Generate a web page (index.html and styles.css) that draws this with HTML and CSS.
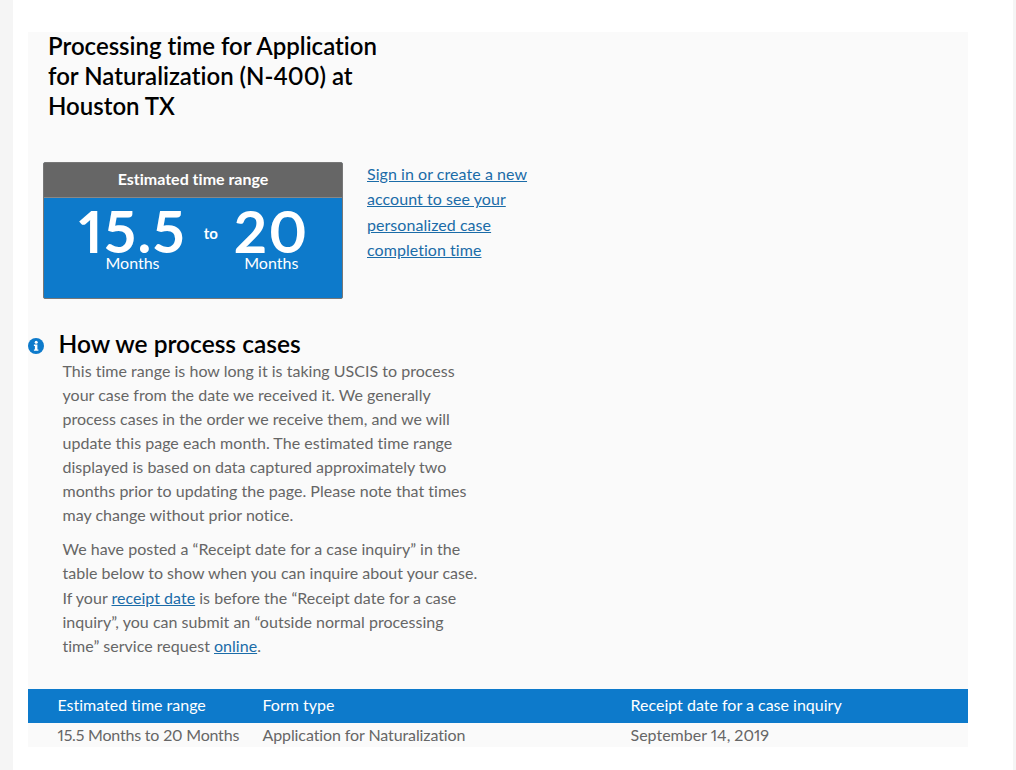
FILE: index.html
```html
<!DOCTYPE html>
<html lang="en">
<head>
<meta charset="utf-8">
<title>Processing time</title>
<link rel="stylesheet" href="styles.css">
</head>
<body>
<div class="sheet">
  <main class="panel">
    <h1 class="title">Processing time for Application for Naturalization (N-400) at Houston TX</h1>
    <section class="summary">
      <div class="range-card">
        <div class="range-head">Estimated time range</div>
        <div class="range-body">
          <div class="range-val"><span class="num">15.5</span><span class="unit">Months</span></div>
          <span class="to">to</span>
          <div class="range-val"><span class="num">20</span><span class="unit">Months</span></div>
        </div>
      </div>
      <p class="signin"><a href="#">Sign in or create a new account to see your personalized case completion time</a></p>
    </section>
    <h2 class="how">
      <svg class="info" viewBox="0 0 16 16" width="16" height="16" aria-hidden="true">
        <circle cx="8" cy="8" r="8" fill="#0d7acb"/>
        <circle cx="8.2" cy="4.2" r="1.5" fill="#fff"/>
        <path d="M5.9 6.6h3.5v4.9h1v1.3H5.9v-1.3h1v-3.6h-1z" fill="#fff"/>
      </svg>
      How we process cases
    </h2>
    <div class="copy">
      <p>This time range is how long it is taking USCIS to process your case from the date we received it. We generally process cases in the order we receive them, and we will update this page each month. The estimated time range displayed is based on data captured approximately two months prior to updating the page. Please note that times may change without prior notice.</p>
      <p>We have posted a “Receipt date for a case inquiry” in the table below to show when you can inquire about your case. If your <a href="#">receipt date</a> is before the “Receipt date for a case inquiry”, you can submit an “outside normal processing time” service request <a href="#">online</a>.</p>
    </div>
    <table class="data">
      <thead>
        <tr><th class="c1">Estimated time range</th><th class="c2">Form type</th><th>Receipt date for a case inquiry</th></tr>
      </thead>
      <tbody>
        <tr><td class="cell-range">15.5 Months to 20 Months</td><td class="cell-form">Application for Naturalization</td><td>September 14, 2019</td></tr>
      </tbody>
    </table>
  </main>
</div>
</body>
</html>
```
FILE: styles.css
```css
* { box-sizing: border-box; }
html, body { margin: 0; height: 770px; overflow: hidden; }
body {
  background: #f5f5f5;
  font-family: "Lato", "Liberation Sans", sans-serif;
  font-variant-ligatures: none;
  font-variant-numeric: proportional-nums;
  color: #666;
  padding-left: 13px;
}
.sheet {
  width: 1000px;
  height: 770px;
  background: #fff;
  padding: 32px 45px 0 15px;
}
.panel { width: 940px; height: 715px; background: #fafafa; display: flex; flex-direction: column; }
.title {
  margin: -1px 0 0 20px;
  width: 345px;
  font-size: 24px;
  line-height: 30px;
  font-weight: 600;
  color: #000;
}
.summary { display: flex; align-items: flex-start; margin: 41px 0 0 15px; }
.range-card {
  width: 300px;
  height: 137px;
  background: #0d7acb;
  border: 1px solid #777;
  border-radius: 2px;
  color: #fff;
}
.range-head {
  height: 35px;
  background: #666;
  border-bottom: 1px solid #888;
  text-align: center;
  font-size: 16px;
  font-weight: 700;
  line-height: 32px;
}
.range-body { display: flex; justify-content: center; align-items: flex-start; padding-left: 1.5px; }
.range-val { display: flex; flex-direction: column; align-items: center; }
.num { font-size: 58px; line-height: 46px; font-weight: 700; margin-top: 10px; letter-spacing: 1.5px; }
.unit { font-size: 16px; line-height: 18px; margin-top: -0.5px; }
.to { font-size: 15px; font-weight: 700; margin: 25px 16px 0 17.5px; line-height: 20px; }
.signin { margin: -1px 0 0 24px; width: 170px; font-size: 16px; line-height: 25.3px; letter-spacing: 0.05px; }
a { color: #1b6ca8; text-decoration: underline; }
.how {
  margin: 30px 0 0 0;
  display: flex;
  align-items: center;
  gap: 14.5px;
  font-size: 24.5px;
  line-height: 30px;
  font-weight: 600;
  color: #000;
}
.info { flex: none; margin-top: 3px; }
.copy { margin: -0.3px 0 0 34.5px; width: 418px; font-size: 16px; line-height: 24.1px; letter-spacing: 0.02px; }
.copy p { margin: 0 0 10px; }
.data { margin-top: auto; width: 940px; border-collapse: collapse; table-layout: fixed; font-size: 16px; }
.data th { background: #0d7acb; color: #fff; font-weight: 400; text-align: left; height: 34px; padding: 0 0 3px 29.5px; }
.data td { height: 24px; padding: 0 0 1px 29.5px; white-space: nowrap; }
.data .cell-range { letter-spacing: -0.2px; }
.data .cell-form { letter-spacing: -0.1px; }
.c1 { width: 205px; }
.c2 { width: 368px; }
```
